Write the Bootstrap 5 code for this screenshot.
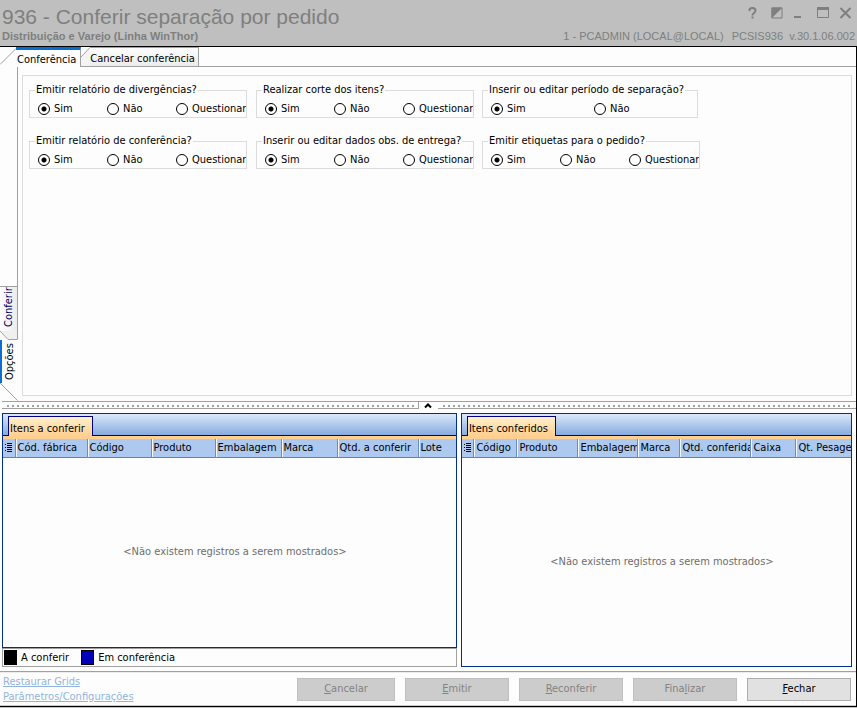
<!DOCTYPE html>
<html lang="pt-BR">
<head>
<meta charset="utf-8">
<meta name="viewport" content="width=device-width, initial-scale=1">
<title>936 - Conferir separação por pedido</title>
<link href="https://cdn.jsdelivr.net/npm/bootstrap@5.3.0/dist/css/bootstrap.min.css" rel="stylesheet">
<style>
:root{--ui:"DejaVu Sans Condensed","Noto Sans",sans-serif;--line:#a0a0a0;--soft:#dcdcdc;--navy:#00308f}
body{font-family:var(--ui);font-size:11px;line-height:14px;color:#000;background:#fdfdfd}
button{font-family:inherit}
.app-head{background:#bebfbe;color:#7f7f7f;font-family:"Liberation Sans",Arial,sans-serif;border-bottom:1px solid #000;padding:4px 2px 4px 2px}
.app-head h1{font-size:21px;line-height:26px;color:#7f7f7f}
.app-head h2{font-size:11px;line-height:12px;font-weight:bold;color:#7f7f7f}
.win-btn{width:12px;height:18px;color:#7f7f7f}
.win-btn svg{display:block}
.win-tools{gap:11px;padding-right:3px}
.session{font-size:11px;line-height:12px;gap:8px}
.app-body{border-right:1px solid #000;border-bottom:1px solid #000}
.tabs-top{height:20px;box-shadow:inset 0 -1px var(--line)}
.tab-top{height:20px;padding:4px 4px 0 1px;font-size:11px;line-height:14px;color:#000;white-space:nowrap}
.tab-top.active{min-width:65px;background:#fdfdfd;border-top:3px solid #0a6ed1;border-right:1px solid var(--line);padding-top:2px}
.tab-top.idle{min-width:107px;background:linear-gradient(#fdfdfd,#ececec);border:1px solid var(--line);border-left:0;padding:4px 3px 0 0}
.opts{flex:334 1 0}
.side{width:18px}
.side-rule{border-right:1px solid var(--line)}
.tab-side{writing-mode:vertical-rl;transform:rotate(180deg);width:18px;line-height:14px;color:#000}
.tab-side.idle{height:45px;padding:2px 0 0 0;color:#000060;background:linear-gradient(to left,#fdfdfd,#ececec);border-left:1px solid var(--line);border-bottom:1px solid var(--line)}
.tab-side.active{height:43px;background:#fdfdfd;border-right:2px solid #0a6ed1}
.opt-box{border:1px solid var(--soft);margin:8px 4px 5px 4px;padding:7px 6px}
.opt-grid{display:grid;grid-template-columns:227px 226px 218px;row-gap:16px}
.opt-grid fieldset{width:218px;height:35px;border:1px solid var(--soft);overflow:hidden}
.opt-grid fieldset.two{width:216px}
.opt-grid legend{float:none;width:auto;font-size:11px;line-height:14px;margin:0 0 0 5px;padding:0 1px}
.choices{padding-top:5px}
.choice{width:69px;gap:4px;padding-left:8px;white-space:nowrap}
.two .choice{width:103px}
.choice input{appearance:none;width:12px;height:12px;margin:0;flex:none;border:1px solid #000;border-radius:50%;background:#fff}
.choice input:checked{background:radial-gradient(circle,#000 2px,#fff 3px)}
.splitter{flex:none;height:8px;border-top:1px solid var(--line);margin-left:2px}
.dots{border-bottom:1px solid var(--line);padding:3px 3px 2px 5px}
.dots i{display:block;height:2px;background:repeating-linear-gradient(90deg,#a0a0a0 0 2px,transparent 2px 5px)}
.dots.lhs{flex:416 1 0;border-right:1px solid var(--line)}
.dots.rhs{flex:419 1 0}
.grip{width:19px}
.grids{flex:254 1 0;gap:4px;padding:4px 4px 4px 2px}
.pane-l{flex:456 1 0;min-width:0}
.pane-r{flex:390 1 0;min-width:0}
.grid-pane{border:1px solid var(--navy);background:#fdfdfd}
.pane-tabs{height:25px;padding:2px 5px 0;background:linear-gradient(#dbe8f9,#8aaee2 20px,#8aaee2);border-bottom:3px solid #ffcf8f;box-shadow:inset 0 -1px #000080}
.pane-tab{height:20px;min-width:85px;text-align:left;border:1px solid #000080;border-bottom:0;background:linear-gradient(#fff0cc,#ffcf8f);padding:4px 7px 0 1px;line-height:14px}
.pane-r .pane-tab{min-width:89px}
.cols{table-layout:fixed;width:100%;background:#adc9ef;border-bottom:1px solid #5b82c4}
.cols th{font-weight:normal;height:18px;padding:1px 0 0 2px;white-space:nowrap;overflow:hidden;line-height:14px;border-left:1px solid #6a8ccb;box-shadow:inset 1px 0 #f4f8fe}
.cols th:first-child{padding:0 0 0 2px;border-left:0;box-shadow:none}
.empty{color:#6d6d6d;padding-left:11px}
.legend-bar{border:1px solid var(--line);height:19px;padding:0 1px}
.swatch{width:13px;height:15px;border:1px solid #000;background:#000}
.swatch.blue{background:#0000b8}
.foot{border-top:1px solid var(--line);border-bottom:1px solid #c8c8c8;padding:2px 5px 1px 3px;box-shadow:inset 0 1px #ececec}
.foot a{color:#90b4de;line-height:15px}
.actions{gap:10px}
.act{height:23px;border:1px solid #adadad;border-radius:0;background:#e1e1e1;color:#000;font-size:11px;line-height:14px;padding:0;width:104px}
.act.slim{width:98px}
.act:disabled{background:#ccc;border-color:#bfbfbf;color:#838383;opacity:1}
.edge{height:1px;background:#bebfbe}
</style>
<script src="https://cdn.jsdelivr.net/npm/bootstrap@5.3.0/dist/js/bootstrap.bundle.min.js"></script>
</head>
<body>
<div class="d-flex flex-column min-vh-100">
<header class="app-head d-flex justify-content-between">
  <div>
    <h1 class="m-0 fw-normal">936 - Conferir separação por pedido</h1>
    <h2 class="m-0">Distribuição e Varejo (Linha WinThor)</h2>
  </div>
  <div class="d-flex flex-column justify-content-between align-items-end">
    <div class="win-tools d-flex">
      <button class="win-btn btn p-0 border-0" aria-label="Ajuda"><svg width="12" height="18"><path d="M1.500 7V6Q1.500 4 4.500 4T7.500 6.500Q7.500 8 6 9T4.500 11.500M4.500 12.500V14.500" fill="none" stroke="#7f7f7f" stroke-width="2"/></svg></button>
      <button class="win-btn btn p-0 border-0" aria-label="Tema"><svg width="12" height="18"><path d="M1 4H11V14H1Z" fill="none" stroke="#7f7f7f"/><path d="M.5 3.500H11.500L.5 14.500Z" fill="#7f7f7f"/></svg></button>
      <button class="win-btn btn p-0 border-0" aria-label="Minimizar"><svg width="12" height="18"><path d="M0 12H7V14H0Z" fill="#7f7f7f"/></svg></button>
      <button class="win-btn btn p-0 border-0" aria-label="Maximizar"><svg width="12" height="18"><path d="M.5 4.500H11.500V13.500H.5Z" fill="none" stroke="#7f7f7f"/><path d="M0 3H12V6H0Z" fill="#7f7f7f"/></svg></button>
      <button class="win-btn btn p-0 border-0" aria-label="Fechar janela"><svg width="12" height="18"><path d="M.5 4L10.500 14M10.500 4L.5 14" stroke="#7f7f7f" stroke-width="2"/></svg></button>
    </div>
    <div class="session d-flex"><span>1 - PCADMIN (LOCAL@LOCAL)</span><span>PCSIS936&nbsp; v.30.1.06.002</span></div>
  </div>
</header>

<main class="app-body d-flex flex-column flex-grow-1">
  <div class="tabs-top d-flex" role="tablist">
    <svg width="16" height="20"><path d="M0 17.500L16 1.500V20H0Z" fill="#fdfdfd"/><path d="M0 17.500L16 1.500" stroke="#a0a0a0" fill="none"/></svg>
    <button class="tab-top active btn rounded-0 border-start-0 border-bottom-0" role="tab" aria-selected="true">Conferência</button>
    <svg width="9" height="20"><path d="M0 10L9 .5V19H0Z" fill="#f4f4f4"/><path d="M0 10L9 .5M0 19.500H9" stroke="#a0a0a0" fill="none"/></svg>
    <button class="tab-top idle btn rounded-0" role="tab" aria-selected="false">Cancelar conferência</button>
  </div>

  <section class="opts d-flex">
    <div class="side d-flex flex-column" role="tablist">
      <div class="side-rule flex-grow-1"></div>
      <button class="tab-side idle border-end-0 border-top-0 text-end" role="tab" aria-selected="false">Conferir</button>
      <svg width="18" height="9"><path d="M0 0H17V8H8Z" fill="#f0f0f0"/><path d="M0 0L8 8.500H17.500V0" stroke="#a0a0a0" fill="none"/></svg>
      <button class="tab-side active border-start-0 border-top-0 border-bottom-0 p-0" role="tab" aria-selected="true">Opções</button>
      <svg width="18" height="18"><path d="M0 0L17.500 17.500" stroke="#a0a0a0" fill="none"/></svg>
    </div>
    <div class="opt-box flex-grow-1">
      <div class="opt-grid">
        <fieldset><legend>Emitir relatório de divergências?</legend><div class="choices d-flex">
          <label class="choice d-flex align-items-center"><input type="radio" name="q1" checked>Sim</label><label class="choice d-flex align-items-center"><input type="radio" name="q1">Não</label><label class="choice flex-grow-1 d-flex align-items-center"><input type="radio" name="q1">Questionar</label></div></fieldset>
        <fieldset><legend>Realizar corte dos itens?</legend><div class="choices d-flex">
          <label class="choice d-flex align-items-center"><input type="radio" name="q2" checked>Sim</label><label class="choice d-flex align-items-center"><input type="radio" name="q2">Não</label><label class="choice flex-grow-1 d-flex align-items-center"><input type="radio" name="q2">Questionar</label></div></fieldset>
        <fieldset class="two"><legend>Inserir ou editar período de separação?</legend><div class="choices d-flex">
          <label class="choice d-flex align-items-center"><input type="radio" name="q3" checked>Sim</label><label class="choice d-flex align-items-center"><input type="radio" name="q3">Não</label></div></fieldset>
        <fieldset><legend>Emitir relatório de conferência?</legend><div class="choices d-flex">
          <label class="choice d-flex align-items-center"><input type="radio" name="q4" checked>Sim</label><label class="choice d-flex align-items-center"><input type="radio" name="q4">Não</label><label class="choice flex-grow-1 d-flex align-items-center"><input type="radio" name="q4">Questionar</label></div></fieldset>
        <fieldset><legend>Inserir ou editar dados obs. de entrega?</legend><div class="choices d-flex">
          <label class="choice d-flex align-items-center"><input type="radio" name="q5" checked>Sim</label><label class="choice d-flex align-items-center"><input type="radio" name="q5">Não</label><label class="choice flex-grow-1 d-flex align-items-center"><input type="radio" name="q5">Questionar</label></div></fieldset>
        <fieldset><legend>Emitir etiquetas para o pedido?</legend><div class="choices d-flex">
          <label class="choice d-flex align-items-center"><input type="radio" name="q6" checked>Sim</label><label class="choice d-flex align-items-center"><input type="radio" name="q6">Não</label><label class="choice flex-grow-1 d-flex align-items-center"><input type="radio" name="q6">Questionar</label></div></fieldset>
      </div>
    </div>
  </section>

  <div class="splitter d-flex">
    <div class="dots lhs"><i></i></div>
    <button class="grip p-0 border-0 bg-transparent d-flex justify-content-center" aria-label="Recolher painel"><svg width="10" height="7"><path d="M2 5.500L5 2.500L8 5.500" fill="none" stroke="#000" stroke-width="2"/></svg></button>
    <div class="dots rhs"><i></i></div>
  </div>

  <section class="grids d-flex">
    <div class="pane-l d-flex flex-column">
      <div class="grid-pane d-flex flex-column flex-grow-1">
        <div class="pane-tabs"><button class="pane-tab d-block" role="tab">Itens a conferir</button></div>
        <table class="cols">
          <colgroup><col style="width:12px"><col style="width:72px"><col style="width:64px"><col style="width:64px"><col style="width:66px"><col style="width:56px"><col style="width:81px"><col></colgroup>
          <thead><tr><th aria-label="Colunas"><svg class="d-block" width="7" height="10"><path d="M0 1.500H1M0 4.500H1M0 7.500H1M2 .5H7M2 2.500H7M2 4.500H7M2 6.500H7M2 8.500H7" stroke="#000"/></svg></th><th>Cód. fábrica</th><th>Código</th><th>Produto</th><th>Embalagem</th><th>Marca</th><th>Qtd. a conferir</th><th>Lote</th></tr></thead>
        </table>
        <div class="empty flex-grow-1 d-flex align-items-center justify-content-center"><span>&lt;Não existem registros a serem mostrados&gt;</span></div>
      </div>
      <div class="legend-bar d-flex align-items-center"><span class="swatch"></span><span class="ps-1 pe-2 me-1">A conferir</span><span class="swatch blue"></span><span class="ps-1">Em conferência</span></div>
    </div>
    <div class="pane-r grid-pane d-flex flex-column">
      <div class="pane-tabs"><button class="pane-tab d-block" role="tab">Itens conferidos</button></div>
      <table class="cols">
        <colgroup><col style="width:12px"><col style="width:43px"><col style="width:61px"><col style="width:60px"><col style="width:42px"><col style="width:71px"><col style="width:45px"><col></colgroup>
        <thead><tr><th aria-label="Colunas"><svg class="d-block" width="7" height="10"><path d="M0 1.500H1M0 4.500H1M0 7.500H1M2 .5H7M2 2.500H7M2 4.500H7M2 6.500H7M2 8.500H7" stroke="#000"/></svg></th><th>Código</th><th>Produto</th><th>Embalagem</th><th>Marca</th><th>Qtd. conferida</th><th>Caixa</th><th>Qt. Pesagem</th></tr></thead>
      </table>
      <div class="empty flex-grow-1 d-flex align-items-center justify-content-center"><span>&lt;Não existem registros a serem mostrados&gt;</span></div>
    </div>
  </section>

  <footer class="foot d-flex justify-content-between align-items-center">
    <div class="d-flex flex-column"><a href="#">Restaurar Grids</a><a href="#">Parâmetros/Configurações</a></div>
    <div class="actions d-flex">
      <button class="act slim btn" disabled><u>C</u>ancelar</button>
      <button class="act btn" disabled><u>E</u>mitir</button>
      <button class="act btn" disabled><u>R</u>econferir</button>
      <button class="act btn" disabled>Fina<u>l</u>izar</button>
      <button class="act btn"><u>F</u>echar</button>
    </div>
  </footer>
</main>
<div class="edge"></div>
</div>
</body>
</html>
